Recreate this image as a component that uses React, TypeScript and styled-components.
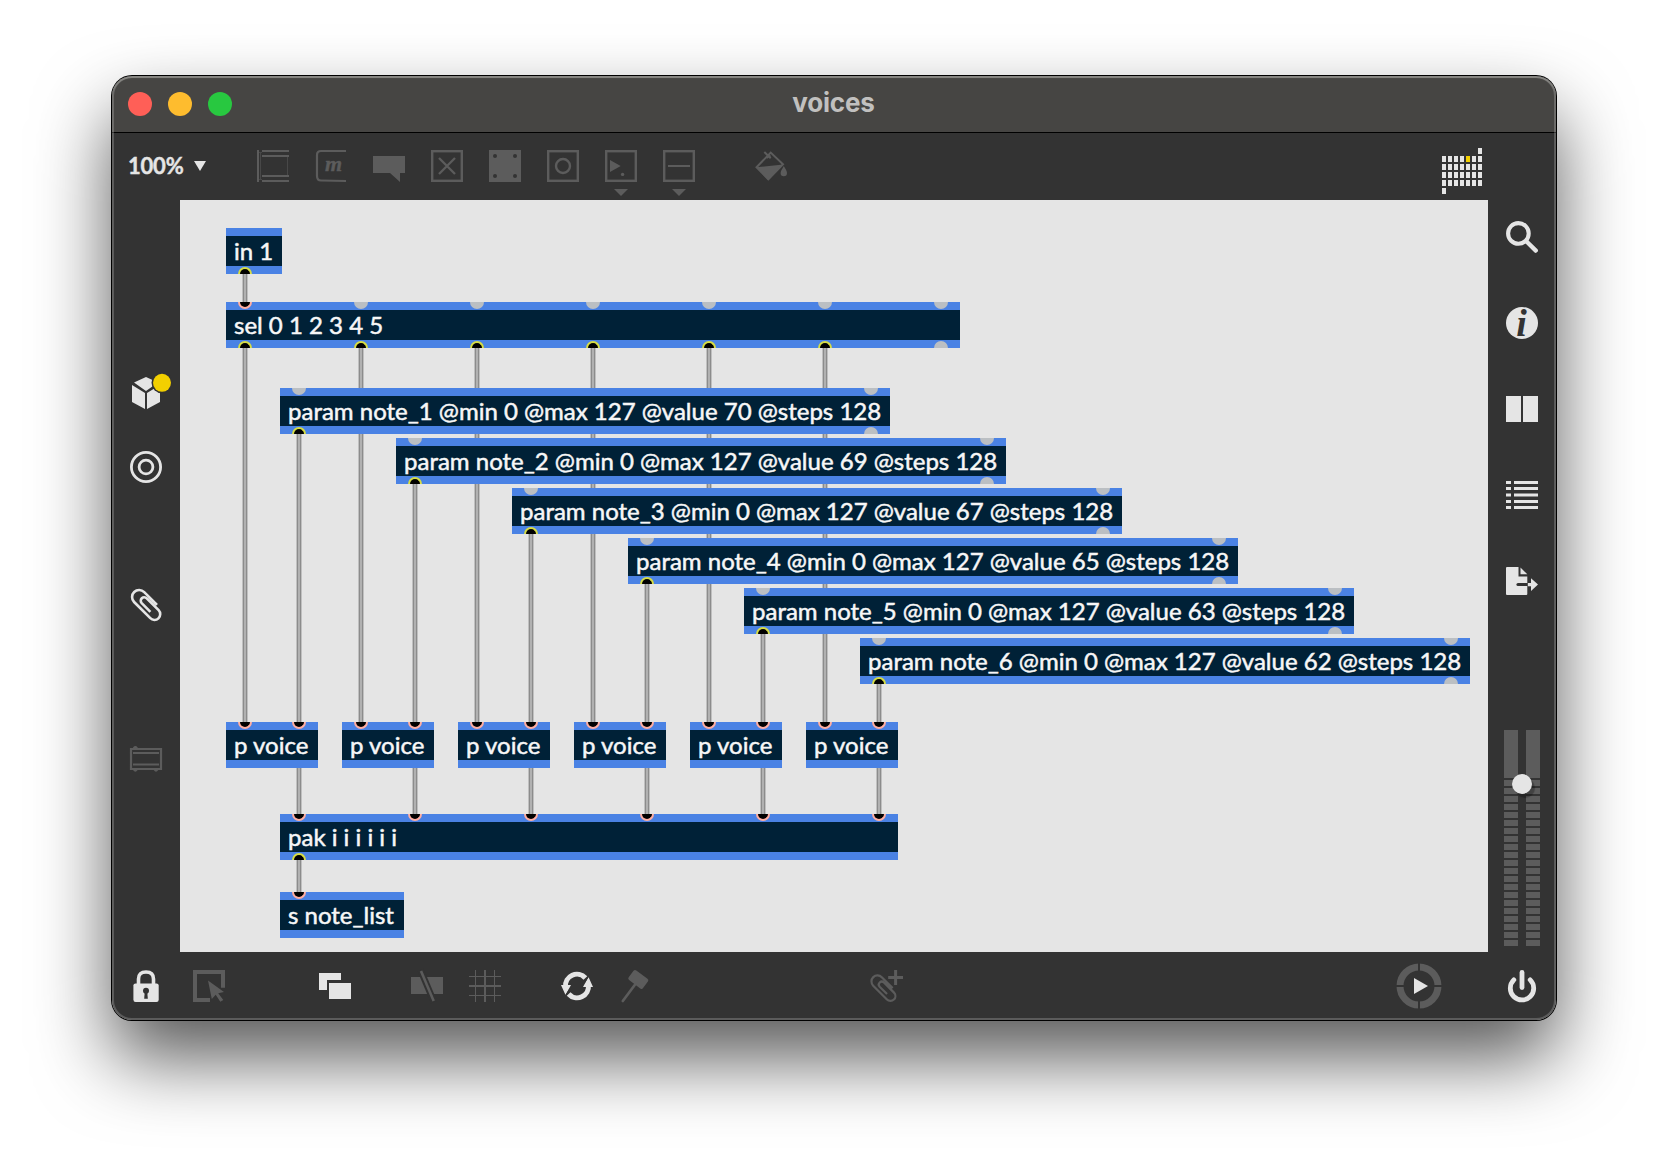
import React from "react";
import styled, { createGlobalStyle } from "styled-components";

const LIT = "#e5e5e5";
const DIM = "#5c5c5c";
const BG = "#333333";

const GlobalStyle = createGlobalStyle`
  * { box-sizing: border-box; }
  body { margin: 0; background: #fff; overflow: hidden; }
`;

const Desktop = styled.main`
  width: 1668px;
  height: 1168px;
  padding: 76px 112px;
  background: #fff;
  font-family: Lato, "Open Sans", sans-serif;
`;

const Window = styled.section`
  position: relative;
  display: flex;
  flex-direction: column;
  height: 944px;
  border-radius: 20px;
  overflow: hidden;
  background: ${BG};
`;

const WindowFrame = styled.div`
  border-radius: 20px;
  box-shadow: 0 0 0 1px #000, 0 38px 76px rgba(0, 0, 0, 0.66);
`;

const EdgeLight = styled.div`
  position: absolute;
  inset: 0;
  border-radius: 20px;
  pointer-events: none;
  box-shadow: inset 0 0 0 2px rgba(255, 255, 255, 0.2), inset 0 2px 1px rgba(255, 255, 240, 0.2);
`;

const TitleBar = styled.header`
  display: grid;
  grid-template-columns: 1fr auto 1fr;
  align-items: center;
  height: 57px;
  padding: 0 16px;
  border-bottom: 1px solid #000;
  background: #464543;
`;

const Lights = styled.div`
  display: flex;
  gap: 16px;
`;

const Light = styled.span<{ $color: string }>`
  width: 24px;
  height: 24px;
  border-radius: 50%;
  background: ${(p) => p.$color};
`;

const Title = styled.h1`
  margin: 0 1px 2px 0;
  font: 700 26px/32px Inter, sans-serif;
  letter-spacing: -0.2px;
  color: #c1c0bf;
`;

const TopBar = styled.div`
  display: flex;
  align-items: flex-start;
  height: 67px;
  padding: 0 74px 0 16px;
`;

const Zoom = styled.div`
  display: flex;
  align-items: center;
  gap: 10px;
  width: 129px;
  height: 65px;
  font-size: 22px;
  font-weight: 700;
  letter-spacing: -0.2px;
  color: ${LIT};
  -webkit-text-stroke: 0.4px ${LIT};
`;

const ZoomArrow = styled.i`
  border: 6px solid transparent;
  border-top: 10px solid ${LIT};
  border-bottom: 0;
`;

const Tool = styled.div<{ $before?: number }>`
  display: flex;
  flex-direction: column;
  align-items: center;
  gap: 7px;
  width: 32px;
  padding-top: 17px;
  margin-left: ${(p) => p.$before ?? 26}px;
`;

const ToolArrow = styled.i`
  border: 7px solid transparent;
  border-top-color: ${DIM};
  border-bottom: 0;
`;

const Middle = styled.div`
  display: flex;
  height: 752px;
`;

const Rail = styled.nav`
  display: flex;
  flex-direction: column;
  align-items: center;
  width: 68px;
`;

const RailItem = styled.div<{ $before?: number }>`
  height: 32px;
  margin-top: ${(p) => p.$before ?? 54}px;
`;

const Canvas = styled.div`
  position: relative;
  width: 1308px;
  background: #e5e5e5;
`;

const BottomBar = styled.footer`
  display: flex;
  align-items: flex-start;
  height: 68px;
  padding: 18px 18px 0;
`;

const BottomItem = styled.div<{ $before?: number }>`
  height: 32px;
  margin-left: ${(p) => p.$before ?? 0}px;
`;

const RightGroup = styled.div`
  display: flex;
  align-items: flex-start;
  gap: 64px;
  margin-left: auto;
`;

const Dial = styled.div`
  margin-top: -7px;
  height: 46px;
`;

const Icon = styled.svg`
  display: block;
  overflow: visible;
`;

const Glyph = styled.text`
  font-family: "Liberation Serif", serif;
  font-style: italic;
  font-weight: 700;
`;

const Node = styled.div<{ $x: number; $y: number; $w: number }>`
  position: absolute;
  left: ${(p) => p.$x - 180}px;
  top: ${(p) => p.$y - 200}px;
  width: ${(p) => p.$w}px;
  height: 46px;
  padding: 0 8px;
  border: solid #4a82e4;
  border-width: 8px 0;
  background: #002137;
`;

const NodeText = styled.span`
  display: block;
  font-size: 24px;
  line-height: 30px;
  white-space: pre;
  color: #f7f7f7;
  -webkit-text-stroke: 0.5px #f7f7f7;
`;

const Cord = styled.div<{ $x: number; $from: number; $to: number }>`
  position: absolute;
  left: ${(p) => p.$x - 183}px;
  top: ${(p) => p.$from - 200}px;
  width: 6px;
  height: ${(p) => p.$to - p.$from}px;
  background: linear-gradient(90deg, #c0c0c0 1px, #8c8c8c 1px 2px, #b1b1b1 2px 4px, #8c8c8c 4px 5px, #c0c0c0 5px);
`;

type PortKind = "in" | "out" | "idle";
const RING: Record<PortKind, string> = { in: "#ffaea2", out: "#d7dd45", idle: "#bbbfc3" };

const Port = styled.i<{ $x: number; $side: "top" | "bottom"; $kind: PortKind }>`
  position: absolute;
  left: ${(p) => p.$x - 7}px;
  ${(p) => p.$side}: -8px;
  width: 14px;
  height: 7px;
  border: 2px solid ${(p) => RING[p.$kind]};
  border-${(p) => p.$side}: 0;
  border-radius: ${(p) => (p.$side === "top" ? "0 0 7px 7px" : "7px 7px 0 0")};
  background: ${(p) => (p.$kind === "idle" ? RING.idle : "#000")};
`;

const Meter = styled.div`
  position: relative;
  display: flex;
  gap: 8px;
  margin-top: 133px;
`;

const Channel = styled.div`
  display: flex;
  flex-direction: column;
  gap: 2px;
  width: 14px;
`;

const Segment = styled.i<{ $h: number }>`
  height: ${(p) => p.$h}px;
  background: ${DIM};
`;

const Knob = styled.i`
  position: absolute;
  left: 8px;
  top: 44px;
  width: 20px;
  height: 20px;
  border-radius: 50%;
  background: ${LIT};
  box-shadow: 3px 4px 1px rgba(0, 0, 0, 0.28);
`;

function Svg({ w = 32, h = 32, children }: { w?: number; h?: number; children: React.ReactNode }) {
  return (
    <Icon width={w} height={h} viewBox={`0 0 ${w} ${h}`} fill="none">
      {children}
    </Icon>
  );
}

const Frame = () => <rect x="1.2" y="1.2" width="29.6" height="29.6" stroke={DIM} strokeWidth="2.4" />;

const ClipPath = ({ color, width = 2.6 }: { color: string; width?: number }) => (
  <path
    d="M27 16.5 14.2 3.7A7 7 0 0 0 4.1 13.6L20.3 29.8A5.7 5.7 0 0 0 28.6 21.8L16.7 10A3.4 3.4 0 0 0 11.7 14.8L20.4 23.4"
    transform="translate(0 -.6)"
    stroke={color}
    strokeWidth={width}
  />
);

type PortSpec = [number, PortKind];
interface BoxSpec {
  text: string;
  x: number;
  y: number;
  w: number;
  ins?: PortSpec[];
  outs?: PortSpec[];
}

const six = [0, 1, 2, 3, 4, 5];
const STEP = 116;
const values = [70, 69, 67, 65, 63, 62];

const boxes: BoxSpec[] = [
  { text: "in 1", x: 226, y: 228, w: 56, outs: [[19, "out"]] },
  {
    text: "sel 0 1 2 3 4 5",
    x: 226,
    y: 302,
    w: 734,
    ins: [...six, 6].map((k): PortSpec => [19 + k * STEP, k === 0 ? "in" : "idle"]),
    outs: [...six, 6].map((k): PortSpec => [19 + k * STEP, k === 6 ? "idle" : "out"]),
  },
  ...six.map((k): BoxSpec => ({
    text: `param note_${k + 1} @min 0 @max 127 @value ${values[k]} @steps 128`,
    x: 280 + k * STEP,
    y: 388 + k * 50,
    w: 610,
    ins: [[19, "idle"], [591, "idle"]],
    outs: [[19, "out"], [591, "idle"]],
  })),
  ...six.map((k): BoxSpec => ({
    text: "p voice",
    x: 226 + k * STEP,
    y: 722,
    w: 92,
    ins: [[19, "in"], [73, "in"]],
  })),
  {
    text: "pak i i i i i i",
    x: 280,
    y: 814,
    w: 618,
    ins: six.map((k): PortSpec => [19 + k * STEP, "in"]),
    outs: [[19, "out"]],
  },
  { text: "s note_list", x: 280, y: 892, w: 124, ins: [[19, "in"]] },
];

const cords: [number, number, number][] = [
  [245, 274, 302],
  ...six.map((k): [number, number, number] => [245 + k * STEP, 348, 722]),
  ...six.map((k): [number, number, number] => [299 + k * STEP, 434 + k * 50, 722]),
  ...six.map((k): [number, number, number] => [299 + k * STEP, 768, 814]),
  [299, 860, 892],
];

function Patch() {
  return (
    <Canvas>
      {cords.map(([x, a, b]) => (
        <Cord key={`${x}-${a}`} $x={x} $from={a} $to={b} />
      ))}
      {boxes.map((b) => (
        <Node key={`${b.x}-${b.y}`} $x={b.x} $y={b.y} $w={b.w}>
          <NodeText>{b.text}</NodeText>
          {b.ins?.map(([x, kind]) => <Port key={`i${x}`} $x={x} $side="top" $kind={kind} />)}
          {b.outs?.map(([x, kind]) => <Port key={`o${x}`} $x={x} $side="bottom" $kind={kind} />)}
        </Node>
      ))}
    </Canvas>
  );
}

function Logo() {
  const cells: [number, number][] = [[6, 0], [0, 5]];
  for (let r = 1; r < 5; r++) for (let c = 0; c < 7; c++) cells.push([c, r]);
  return (
    <Svg w={40} h={46}>
      {cells.map(([c, r]) => (
        <rect key={`${c}-${r}`} x={c * 6} y={r * 8} width="4" height="6" fill={c === 4 && r === 1 ? "#f3d000" : LIT} />
      ))}
    </Svg>
  );
}

const LogoSlot = styled.div`
  margin: 15px 0 0 auto;
`;

function Toolbar() {
  return (
    <TopBar>
      <Zoom>100%<ZoomArrow /></Zoom>
      <Tool $before={0}>
        <Svg>
          <path d="M1 0V32M5 1H32M5 6H32M5 26H32M5 31H32" stroke={DIM} strokeWidth="2" />
          <path d="M3.5 2V30M30.5 7V25M2 2.5H5M2 29.5H5" stroke="#484848" />
        </Svg>
      </Tool>
      <Tool>
        <Svg>
          <path d="M31 1H6Q2 1 2 5V26Q2 30.5 6 30.5L31 31" stroke={DIM} strokeWidth="2.2" />
          <Glyph x="10" y="21" fontSize="22" fill={DIM} stroke={DIM} strokeWidth=".4">m</Glyph>
        </Svg>
      </Tool>
      <Tool><Svg><path d="M0 6H32V23H27V32L17 23H0Z" fill={DIM} /></Svg></Tool>
      <Tool><Svg><Frame /><path d="M8 8 24 24M24 8 8 24" stroke={DIM} strokeWidth="2.3" /></Svg></Tool>
      <Tool>
        <Svg>
          <rect width="32" height="32" fill={DIM} />
          {[[6, 6], [26, 6], [6, 26], [26, 26]].map(([x, y]) => (
            <circle key={`${x}-${y}`} cx={x} cy={y} r="2" fill={BG} />
          ))}
        </Svg>
      </Tool>
      <Tool><Svg><Frame /><circle cx="16" cy="16" r="7" stroke={DIM} strokeWidth="2.4" /></Svg></Tool>
      <Tool>
        <Svg><Frame /><path d="M5 10 15.7 16 5 22Z" fill={DIM} /><circle cx="17.6" cy="24.4" r="1.7" fill={DIM} /></Svg>
        <ToolArrow />
      </Tool>
      <Tool>
        <Svg><Frame /><path d="M5 16H27" stroke={DIM} strokeWidth="2" /></Svg>
        <ToolArrow />
      </Tool>
      <Tool $before={60}>
        <Svg>
          <path d="M15.7 2.6 1.5 17.3 13.3 29.3 28 14.3Z" stroke={DIM} strokeWidth="2" />
          <path d="M1 17.3 28.2 14.5 13.3 30.3Z" fill={DIM} />
          <path d="M9.3 2 15.7 8.3M15.5 5.5 11.5 8" stroke={DIM} strokeWidth="2" />
          <path d="M28.8 16C30 18.5 32 20.6 32 23A3.2 3.2 0 0 1 25.6 23C25.6 20.6 27.8 18.5 28.8 16Z" fill={DIM} />
        </Svg>
      </Tool>
      <LogoSlot><Logo /></LogoSlot>
    </TopBar>
  );
}

function LeftRail() {
  return (
    <Rail>
      <RailItem $before={177}>
        <Svg>
          <path d="M16 0 28 5.6 16 14 4 5.6ZM2 8 15 16V32L2 25ZM30 8 17 16V32L30 25Z" fill={LIT} />
          <circle cx="32" cy="5.8" r="10.5" fill={BG} />
          <circle cx="32" cy="5.8" r="9" fill="#f3d000" />
        </Svg>
      </RailItem>
      <RailItem $before={42}>
        <Svg>
          <circle cx="16" cy="16" r="14.6" stroke={LIT} strokeWidth="2.8" />
          <circle cx="16" cy="16" r="6.9" stroke={LIT} strokeWidth="2.8" />
        </Svg>
      </RailItem>
      <RailItem $before={106}><Svg><ClipPath color={LIT} /></Svg></RailItem>
      <RailItem $before={122}>
        <Svg>
          <path d="M1 6H31V26H1Z M3 10H29M3 21.5H29" stroke={DIM} strokeWidth="2.2" />
          <path d="M3 5V4.5Q5.3 1.6 7.7 4.5V5ZM3 27Q5.3 30.5 7.7 27ZM23.7 27Q26 30.5 28.3 27Z" fill={DIM} />
        </Svg>
      </RailItem>
    </Rail>
  );
}

function RightRail() {
  const segments = [48, ...Array.from({ length: 21 }, () => 6)];
  return (
    <Rail>
      <RailItem $before={21}>
        <Svg>
          <circle cx="12.4" cy="12.4" r="10.3" stroke={LIT} strokeWidth="4.1" />
          <path d="M20.3 20.3 29.8 29.6" stroke={LIT} strokeWidth="4.3" strokeLinecap="round" />
        </Svg>
      </RailItem>
      <RailItem>
        <Svg>
          <circle cx="16" cy="16" r="16" fill={LIT} />
          <Glyph x="10.3" y="28.6" fontSize="38" fill={BG}>i</Glyph>
        </Svg>
      </RailItem>
      <RailItem><Svg><path d="M0 3H15V29H0ZM17 3H32V29H17Z" fill={LIT} /></Svg></RailItem>
      <RailItem>
        <Svg>
          {[3.5, 9.5, 16, 22.5, 28.5].map((y) => (
            <path key={y} d={`M0 ${y}H5M8 ${y}H32`} stroke={LIT} strokeWidth="3" />
          ))}
        </Svg>
      </RailItem>
      <RailItem>
        <Svg>
          <path d="M1 2H12.5V11.5H21.3V29Q21.3 30 20.3 30H1Q0 30 0 29V3Q0 2 1 2ZM14.5 2.5 21.3 9.3H14.5Z" fill={LIT} />
          <path d="M12 19.5H22" stroke={BG} strokeWidth="3.2" strokeLinecap="round" />
          <path d="M21.8 18H25V13.3L32 19.5 25 26V21.2H21.8Z" fill={LIT} />
        </Svg>
      </RailItem>
      <Meter>
        {[0, 1].map((c) => (
          <Channel key={c}>{segments.map((h, i) => <Segment key={i} $h={h} />)}</Channel>
        ))}
        <Knob />
      </Meter>
    </Rail>
  );
}

function StatusBar() {
  return (
    <BottomBar>
      <BottomItem>
        <Svg>
          <path d="M8.5 15V9Q8.5 2 16 2T23.5 9V15" stroke={LIT} strokeWidth="3.6" />
          <rect x="3.4" y="13.4" width="25.3" height="18.6" rx="2.2" fill={LIT} />
          <circle cx="16" cy="20.8" r="3" fill={BG} />
          <path d="M14.8 21H17.2L17.8 28.7H14.2Z" fill={BG} />
        </Svg>
      </BottomItem>
      <BottomItem $before={31}>
        <Svg>
          <path d="M17 30H2V2H30V17.8" stroke={DIM} strokeWidth="4" />
          <path d="M15 10.5 31 22 25.2 23.2 30.3 30 27.3 31.8 22.7 24.8 18.8 29Z" fill={DIM} />
        </Svg>
      </BottomItem>
      <BottomItem $before={94}><Svg><path d="M0 3H22V10H8V20H0ZM10 13H32V29H10Z" fill={LIT} /></Svg></BottomItem>
      <BottomItem $before={60}>
        <Svg>
          <path d="M0 7H32V24H0Z" fill={DIM} />
          <path d="M9.5 0 23 32" stroke={BG} strokeWidth="6.5" />
          <path d="M10 1 22.7 31" stroke={DIM} strokeWidth="2.6" />
        </Svg>
      </BottomItem>
      <BottomItem $before={26}>
        <Svg>
          <path d="M6.5 0V32M25.5 0V32M0 6.5H32M0 25.5H32" stroke={DIM} />
          <path d="M16 0V32M0 16H32" stroke={DIM} strokeWidth="2" />
        </Svg>
      </BottomItem>
      <BottomItem $before={60}>
        <Svg>
          <path d="M4.6 17A11.4 11.4 0 0 1 24.4 8" stroke={LIT} strokeWidth="5" />
          <path d="M27.4 15A11.4 11.4 0 0 1 7.6 24" stroke={LIT} strokeWidth="5" />
          <path d="M27.5 7 22 17H32ZM4.5 25 10 15H0Z" fill={LIT} />
          <path d="M27.6 6.4 23 13.5M4.4 25.6 9 18.5" stroke={BG} strokeWidth="1" />
        </Svg>
      </BottomItem>
      <BottomItem $before={26}>
        <Svg>
          <path d="M3.8 31 16.5 14" stroke={DIM} strokeWidth="2.7" strokeLinecap="round" />
          <rect x="-9" y="-6" width="18" height="12" rx="2" transform="translate(19.3 9.4) rotate(37)" fill={DIM} />
        </Svg>
      </BottomItem>
      <BottomItem $before={220}>
        <Svg>
          <g transform="translate(-1.3 4.6) scale(.85)"><ClipPath color={DIM} /></g>
          <path d="M24.6 0V15M17.2 7.5H32" stroke={DIM} strokeWidth="3" />
        </Svg>
      </BottomItem>
      <RightGroup>
        <Dial>
          <Svg w={46} h={46}>
            <circle cx="23" cy="23" r="19" stroke={DIM} strokeWidth="7" />
            <path d="M23 0V46M0 23H46" stroke={BG} strokeWidth="2" />
            <path d="M18 15 32 23 18 31Z" fill={LIT} />
          </Svg>
        </Dial>
        <BottomItem>
          <Svg>
            <path d="M7.8 9.9A11.7 11.7 0 1 0 24.2 9.9" stroke={LIT} strokeWidth="4.8" strokeLinecap="round" />
            <path d="M16 2.4V17.6" stroke={LIT} strokeWidth="4.8" strokeLinecap="round" />
          </Svg>
        </BottomItem>
      </RightGroup>
    </BottomBar>
  );
}

export default function App() {
  return (
    <Desktop>
      <GlobalStyle />
      <WindowFrame>
        <Window>
          <TitleBar>
            <Lights>
              <Light $color="#ff5f57" />
              <Light $color="#febc2e" />
              <Light $color="#28c840" />
            </Lights>
            <Title>voices</Title>
          </TitleBar>
          <Toolbar />
          <Middle>
            <LeftRail />
            <Patch />
            <RightRail />
          </Middle>
          <StatusBar />
          <EdgeLight />
        </Window>
      </WindowFrame>
    </Desktop>
  );
}
